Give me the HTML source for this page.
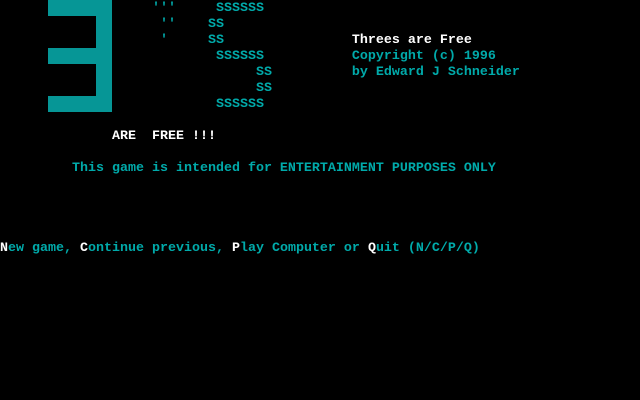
<!DOCTYPE html>
<html><head><style>
html,body{margin:0;padding:0;background:#000;width:640px;height:400px;overflow:hidden}
.r{position:absolute;left:0;height:16px;line-height:18px;font-family:"Liberation Mono",monospace;font-size:13.33px;white-space:pre;color:#00aaaa;font-weight:bold}
.w{color:#fff}
.b{position:absolute;background:#069696}
</style></head><body>
<div class="b" style="left:48px;top:0;width:64px;height:16px"></div>
<div class="b" style="left:96px;top:16px;width:16px;height:32px"></div>
<div class="b" style="left:48px;top:48px;width:64px;height:16px"></div>
<div class="b" style="left:96px;top:64px;width:16px;height:32px"></div>
<div class="b" style="left:48px;top:96px;width:64px;height:16px"></div>
<div class="r" style="top:0">                   '''     SSSSSS</div>
<div class="r" style="top:16px">                    ''    SS</div>
<div class="r" style="top:32px">                    '     SS                <span class="w">Threes are Free</span></div>
<div class="r" style="top:48px">                           SSSSSS           Copyright (c) 1996</div>
<div class="r" style="top:64px">                                SS          by Edward J Schneider</div>
<div class="r" style="top:80px">                                SS</div>
<div class="r" style="top:96px">                           SSSSSS</div>
<div class="r w" style="top:128px">              ARE  FREE !!!</div>
<div class="r" style="top:160px">         This game is intended for ENTERTAINMENT PURPOSES ONLY</div>
<div class="r" style="top:240px"><span class="w">N</span>ew game, <span class="w">C</span>ontinue previous, <span class="w">P</span>lay Computer or <span class="w">Q</span>uit (N/C/P/Q)</div>
</body></html>
